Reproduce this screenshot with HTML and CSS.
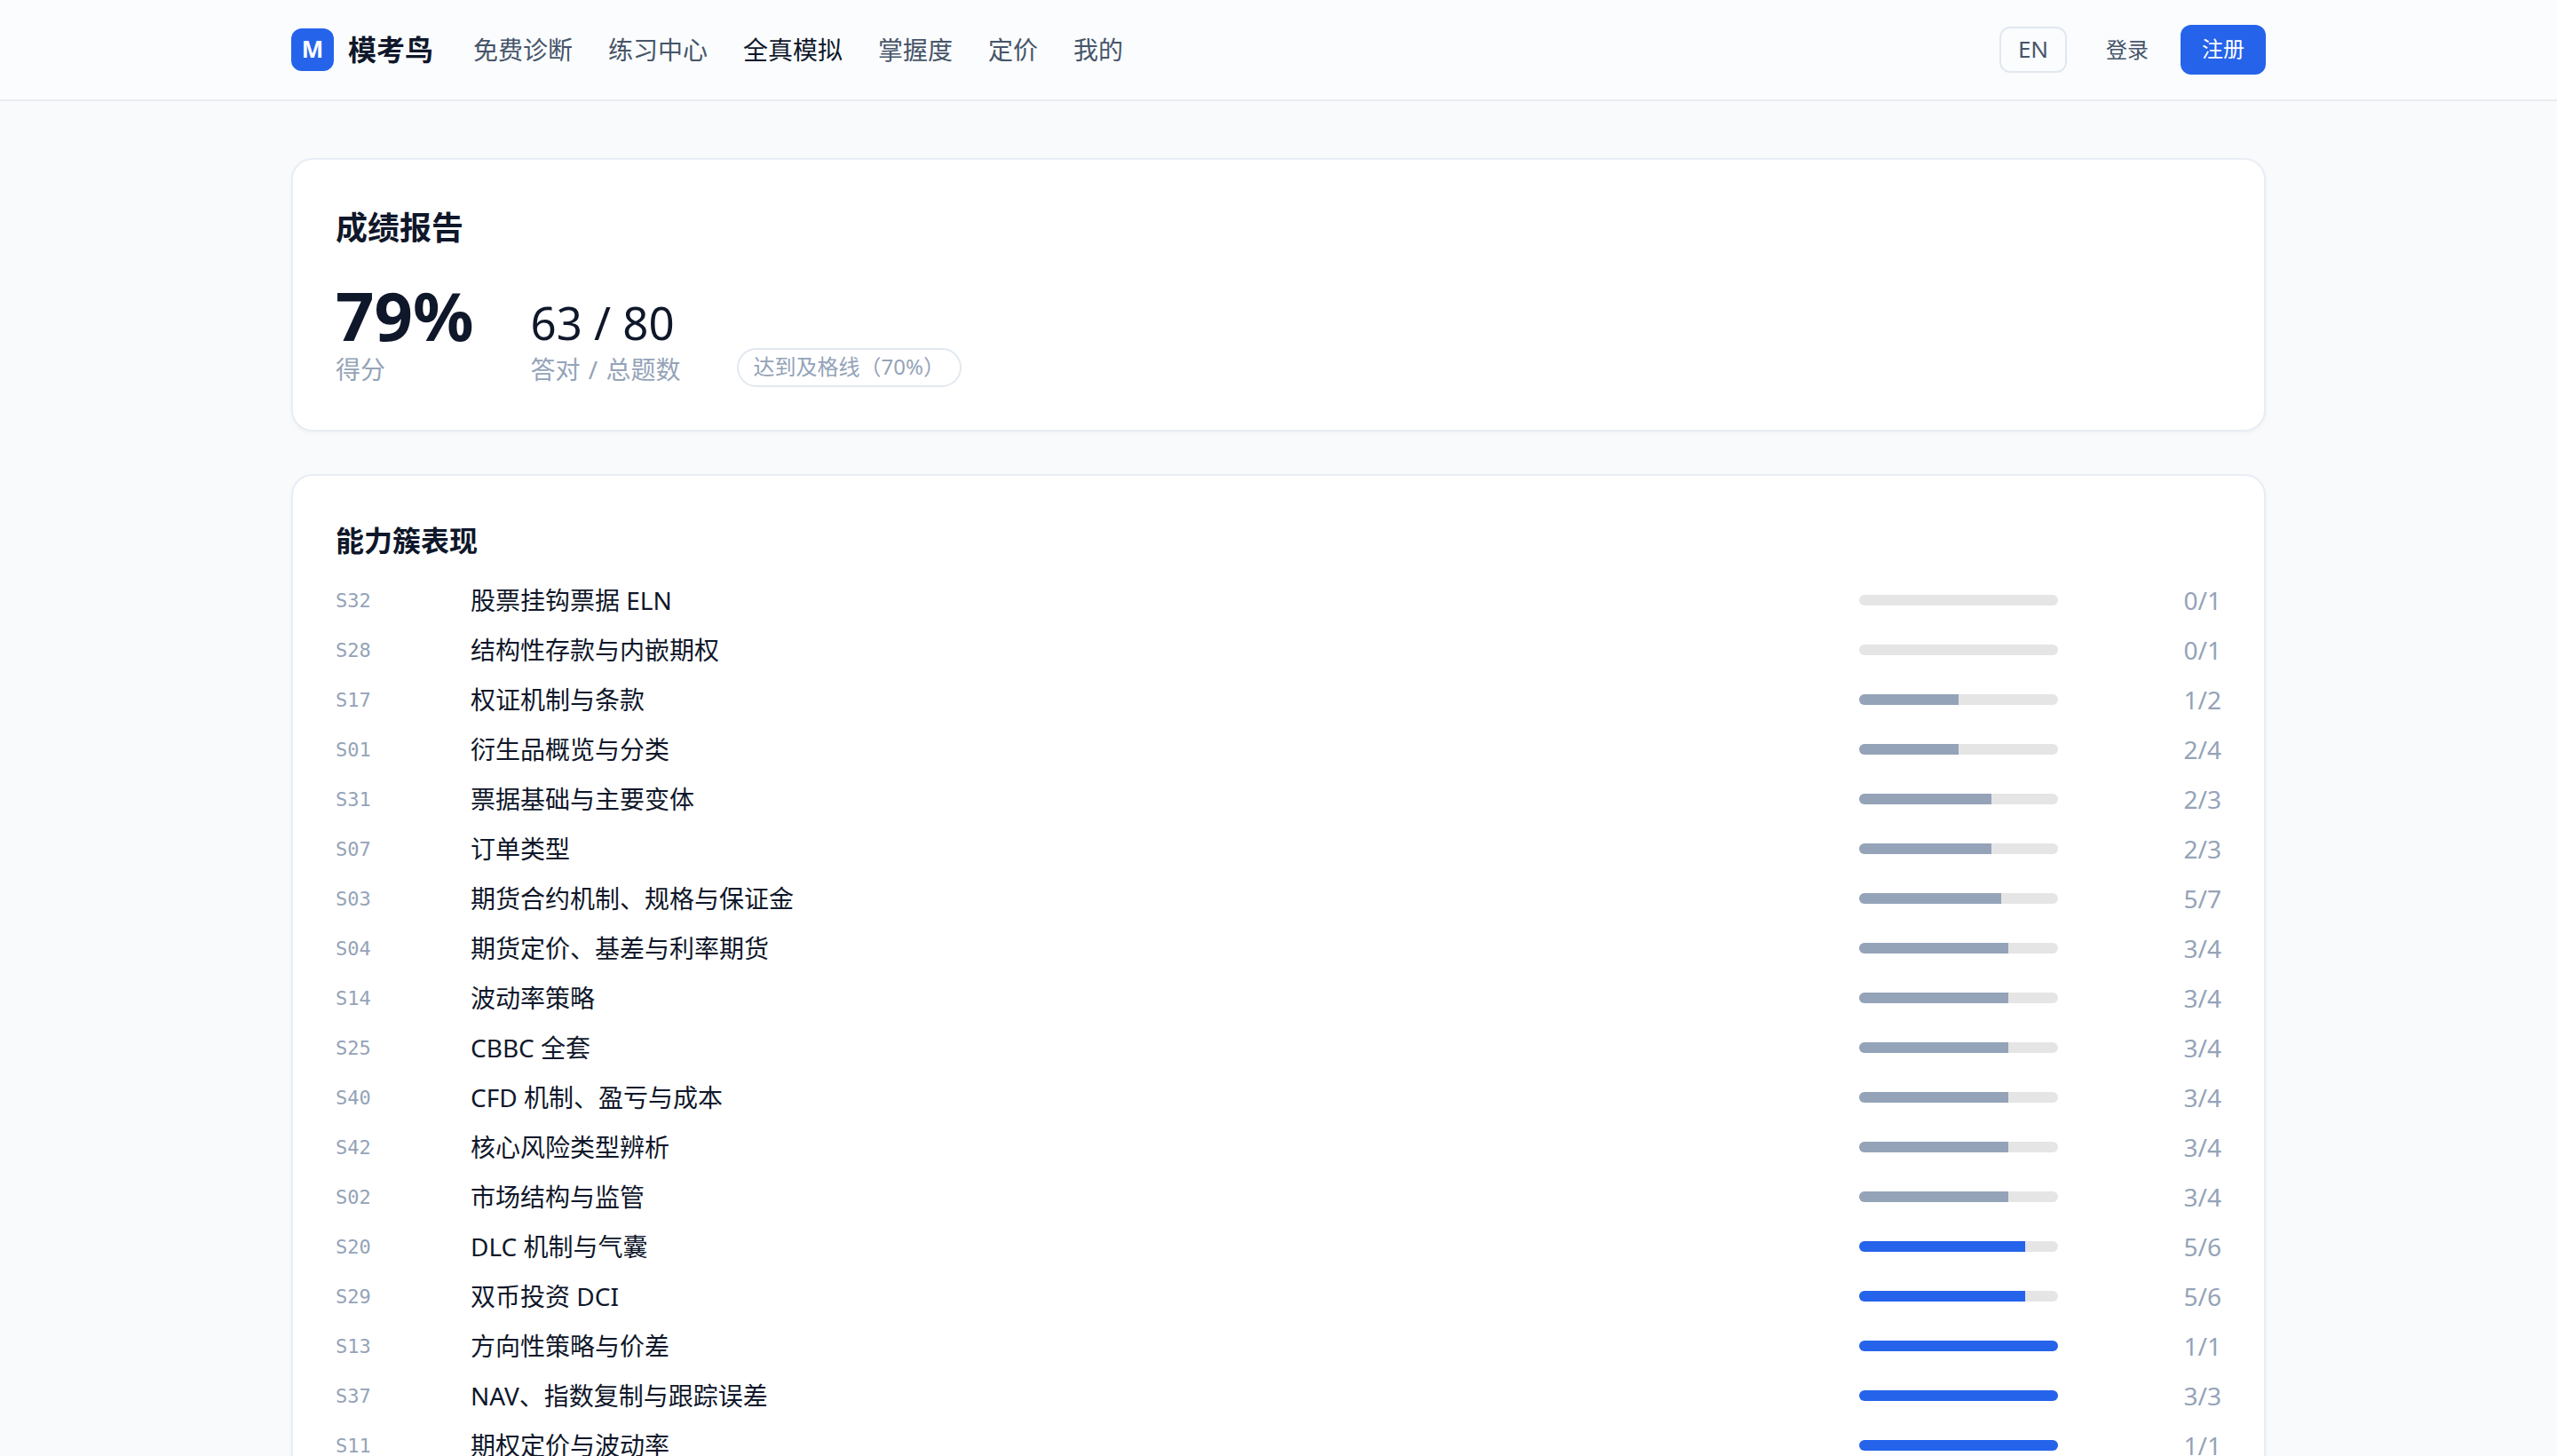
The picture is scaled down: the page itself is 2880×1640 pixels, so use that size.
FILE: index.html
```html
<!DOCTYPE html>
<html lang="zh-CN">

<head>
  <meta charset="UTF-8">
  <meta name="viewport" content="width=device-width, initial-scale=1.0">
  <title>成绩报告 - 模考鸟</title>
  <link rel="stylesheet" href="styles.css">
</head>

<body>
  <header class="topbar">
    <div class="topbar-inner">
      <a class="brand" href="#"><span class="brand-mark">M</span><span class="brand-name">模考鸟</span></a>
      <nav class="nav">
        <a href="#">免费诊断</a>
        <a href="#">练习中心</a>
        <a href="#" class="active">全真模拟</a>
        <a href="#">掌握度</a>
        <a href="#">定价</a>
        <a href="#">我的</a>
      </nav>
      <div class="actions">
        <button class="lang">EN</button>
        <a href="#" class="login">登录</a>
        <a href="#" class="signup">注册</a>
      </div>
    </div>
  </header>

  <main class="page">
    <section class="card card-score">
      <h1>成绩报告</h1>
      <div class="stats">
        <div class="stat">
          <div class="stat-big">79%</div>
          <div class="stat-label">得分</div>
        </div>
        <div class="stat">
          <div class="stat-mid">63 / 80</div>
          <div class="stat-label">答对 / 总题数</div>
        </div>
        <span class="pill">达到及格线（70%）</span>
      </div>
    </section>

    <section class="card">
      <h2>能力簇表现</h2>
      <div class="rows">
        <div class="row"><span class="code">S32</span><span class="name">股票挂钩票据 ELN</span><div class="track"><div class="fill" style="width:0%"></div></div><span class="count">0/1</span></div>
        <div class="row"><span class="code">S28</span><span class="name">结构性存款与内嵌期权</span><div class="track"><div class="fill" style="width:0%"></div></div><span class="count">0/1</span></div>
        <div class="row"><span class="code">S17</span><span class="name">权证机制与条款</span><div class="track"><div class="fill" style="width:50%"></div></div><span class="count">1/2</span></div>
        <div class="row"><span class="code">S01</span><span class="name">衍生品概览与分类</span><div class="track"><div class="fill" style="width:50%"></div></div><span class="count">2/4</span></div>
        <div class="row"><span class="code">S31</span><span class="name">票据基础与主要变体</span><div class="track"><div class="fill" style="width:66.67%"></div></div><span class="count">2/3</span></div>
        <div class="row"><span class="code">S07</span><span class="name">订单类型</span><div class="track"><div class="fill" style="width:66.67%"></div></div><span class="count">2/3</span></div>
        <div class="row"><span class="code">S03</span><span class="name">期货合约机制、规格与保证金</span><div class="track"><div class="fill" style="width:71.43%"></div></div><span class="count">5/7</span></div>
        <div class="row"><span class="code">S04</span><span class="name">期货定价、基差与利率期货</span><div class="track"><div class="fill" style="width:75%"></div></div><span class="count">3/4</span></div>
        <div class="row"><span class="code">S14</span><span class="name">波动率策略</span><div class="track"><div class="fill" style="width:75%"></div></div><span class="count">3/4</span></div>
        <div class="row"><span class="code">S25</span><span class="name">CBBC 全套</span><div class="track"><div class="fill" style="width:75%"></div></div><span class="count">3/4</span></div>
        <div class="row"><span class="code">S40</span><span class="name">CFD 机制、盈亏与成本</span><div class="track"><div class="fill" style="width:75%"></div></div><span class="count">3/4</span></div>
        <div class="row"><span class="code">S42</span><span class="name">核心风险类型辨析</span><div class="track"><div class="fill" style="width:75%"></div></div><span class="count">3/4</span></div>
        <div class="row"><span class="code">S02</span><span class="name">市场结构与监管</span><div class="track"><div class="fill" style="width:75%"></div></div><span class="count">3/4</span></div>
        <div class="row"><span class="code">S20</span><span class="name">DLC 机制与气囊</span><div class="track"><div class="fill high" style="width:83.33%"></div></div><span class="count">5/6</span></div>
        <div class="row"><span class="code">S29</span><span class="name">双币投资 DCI</span><div class="track"><div class="fill high" style="width:83.33%"></div></div><span class="count">5/6</span></div>
        <div class="row"><span class="code">S13</span><span class="name">方向性策略与价差</span><div class="track"><div class="fill high" style="width:100%"></div></div><span class="count">1/1</span></div>
        <div class="row"><span class="code">S37</span><span class="name">NAV、指数复制与跟踪误差</span><div class="track"><div class="fill high" style="width:100%"></div></div><span class="count">3/3</span></div>
        <div class="row"><span class="code">S11</span><span class="name">期权定价与波动率</span><div class="track"><div class="fill high" style="width:100%"></div></div><span class="count">1/1</span></div>
      </div>
    </section>
  </main>
</body>

</html>
```

FILE: styles.css
```css
* {
  box-sizing: border-box;
}

html,
body {
  height: 1640px;
  overflow: hidden;
}

body {
  margin: 0;
  background: #f8fafc;
  color: #0f172a;
  font-family: "Noto Sans", "Noto Sans CJK SC", sans-serif;
}

a {
  color: inherit;
  text-decoration: none;
}

.topbar {
  height: 114px;
  background: #fafcfe;
  border-bottom: 2px solid #e9ecef;
}

.topbar-inner {
  width: 2224px;
  height: 112px;
  margin: 0 auto;
  display: flex;
  align-items: center;
}

.brand {
  display: flex;
  align-items: center;
  gap: 16px;
  margin-right: 45px;
}

.brand-mark {
  width: 48px;
  height: 48px;
  border-radius: 12px;
  background: #2563eb;
  color: #fff;
  font-size: 26px;
  font-weight: 700;
  line-height: 46px;
  text-align: center;
}

.brand-name {
  font-size: 32px;
  font-weight: 700;
  line-height: 48px;
}

.nav {
  display: flex;
  gap: 40px;
  font-size: 28px;
  line-height: 42px;
  color: #475569;
}

.nav .active {
  color: #0f172a;
}

.actions {
  margin-left: auto;
  display: flex;
  align-items: center;
  font-size: 24px;
  color: #475569;
}

.lang {
  width: 76px;
  height: 52px;
  padding: 0 0 2px;
  background: transparent;
  border: 2px solid #e2e8f0;
  border-radius: 12px;
  color: #475569;
  font: inherit;
  font-size: 26px;
}

.login {
  margin: 0 36px 0 44px;
  padding-bottom: 3px;
}

.signup {
  width: 96px;
  height: 56px;
  background: #2563eb;
  border-radius: 12px;
  color: #fff;
  line-height: 53px;
  text-align: center;
}

.page {
  width: 2224px;
  margin: 64px auto 0;
  display: flex;
  flex-direction: column;
  gap: 48px;
}

.card {
  padding: 48px;
  background: #fff;
  border: 2px solid #e8edf5;
  border-radius: 24px;
  box-shadow: 0 2px 4px rgba(15, 23, 42, 0.04);
}

.card-score {
  padding-bottom: 47px;
}

h1 {
  margin: 2px 0 31px;
  font-size: 36px;
  font-weight: 700;
  line-height: 54px;
}

h2 {
  margin: 1px 0 15px;
  font-size: 32px;
  font-weight: 700;
  line-height: 48px;
}

.stats {
  display: flex;
  align-items: flex-end;
  gap: 64px;
}

.stat-big {
  font-size: 76px;
  font-weight: 700;
  line-height: 80px;
}

.stat-mid {
  font-size: 51px;
  line-height: 64px;
}

.stat-label {
  font-size: 28px;
  line-height: 42px;
  word-spacing: 2px;
  color: #94a3b8;
}

.pill {
  margin-bottom: 1px;
  padding: 0 17px 0 16px;
  height: 44px;
  border: 2px solid #e2e8f0;
  border-radius: 22px;
  font-size: 24px;
  line-height: 38px;
  color: #94a3b8;
}

.row {
  display: grid;
  grid-template-columns: 128px 1fr 224px 160px;
  gap: 24px;
  align-items: center;
  height: 56px;
}

.code {
  font-family: "DejaVu Sans Mono", monospace;
  font-size: 22px;
  color: #94a3b8;
}

.name {
  font-size: 28px;
  line-height: 42px;
}

.track {
  height: 12px;
  border-radius: 6px;
  background: #e5e5e5;
  overflow: hidden;
}

.fill {
  height: 100%;
  background: #94a3b8;
}

.fill.high {
  background: #2563eb;
}

.count {
  font-size: 28px;
  line-height: 42px;
  color: #94a3b8;
  text-align: right;
}
```
